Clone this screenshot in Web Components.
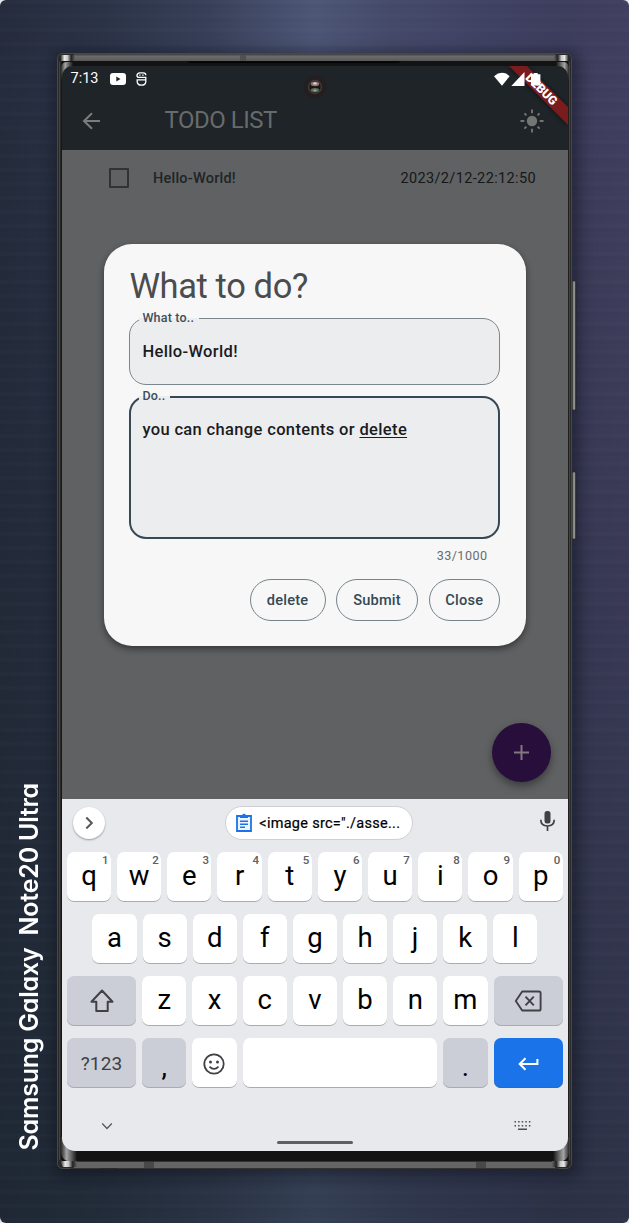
<!DOCTYPE html>
<html lang="en">
<head>
<meta charset="utf-8">
<title>Todo List</title>
<style>
html,body{margin:0;background:#e4e5e8}
body{width:629px;height:1223px;overflow:hidden;font-family:Roboto,sans-serif}
</style>
</head>
<body>
<device-stage>
  <device-label slot="label">Samsung Galaxy&nbsp; Note20 Ultra</device-label>
  <phone-frame>
    <todo-screen></todo-screen>
    <soft-keyboard></soft-keyboard>
  </phone-frame>
</device-stage>
<script>
const define = (name, html) => {
  const t = document.createElement('template');
  t.innerHTML = html;
  customElements.define(name, class extends HTMLElement {
    constructor() {
      super();
      this.attachShadow({mode: 'open'}).appendChild(t.content.cloneNode(true));
    }
  });
};

define('device-stage', `
<style>
:host{display:grid;grid-template-columns:57px 515px 57px;grid-template-rows:1116px;padding:53px 0 54px;width:629px;height:1223px;box-sizing:border-box;border-radius:6px;overflow:hidden;
background:
 repeating-linear-gradient(180deg,rgba(255,255,255,.01) 0 3px,rgba(0,0,0,.018) 5px 7px,transparent 9px 14px),
 linear-gradient(180deg,rgba(20,28,32,0) 0%,rgba(20,28,32,.15) 40%,rgba(22,34,40,.45) 100%),
 linear-gradient(90deg,#252c3d 0%,#2b3347 16%,#384059 33%,#4d5677 50%,#454a6b 62%,#404264 78%,#3d3d5d 90%,#424061 100%)}
</style>
<slot name="label"></slot><slot></slot>`);

define('device-label', `
<style>
:host{display:flex;align-items:center;height:1116px;width:57px;color:#fff;font:600 25px/30px Inter,sans-serif;font-feature-settings:"cv11";letter-spacing:-.22px}
span{writing-mode:vertical-rl;transform:rotate(180deg);white-space:pre;margin:711px 0 0 14px;display:block}
</style>
<span><slot></slot></span>`);

define('phone-frame', `
<style>
:host{display:block;position:relative;width:515px;height:1116px;box-sizing:border-box;padding:13px 4px 18px 5px;border-radius:6px;background:#262626;box-shadow:2px 3px 14px 5px rgba(10,12,22,.42)}
svg{position:absolute;left:0;top:0;overflow:visible}
.screen{position:relative;width:506px;height:1085px;border-radius:11px 11px 13px 13px;overflow:hidden;display:flex;flex-direction:column;background:#1e2427}
</style>
<svg width="520" height="1116" viewBox="0 0 520 1116">
 <defs>
  <linearGradient id="t" x1="0" y1="0" x2="0" y2="1"><stop offset="0" stop-color="#3d3d3d"/><stop offset=".3" stop-color="#6b6b6b"/><stop offset=".8" stop-color="#5c5c5c"/><stop offset="1" stop-color="#222"/></linearGradient>
  <linearGradient id="c" x1="0" x2="1"><stop offset="0" stop-color="#2a2a2a"/><stop offset=".35" stop-color="#a5a5a5"/><stop offset="1" stop-color="#131313"/></linearGradient>
  <linearGradient id="d" x1="1" x2="0"><stop offset="0" stop-color="#2a2a2a"/><stop offset=".35" stop-color="#a5a5a5"/><stop offset="1" stop-color="#131313"/></linearGradient>
  <linearGradient id="e" x1="0" x2="1"><stop offset="0" stop-color="#111"/><stop offset=".3" stop-color="#e8e8e8"/><stop offset=".5" stop-color="#c8c8c8"/><stop offset=".75" stop-color="#222"/><stop offset="1" stop-color="#626262"/></linearGradient>
  <linearGradient id="f" x1="1" x2="0"><stop offset="0" stop-color="#111"/><stop offset=".3" stop-color="#e8e8e8"/><stop offset=".5" stop-color="#c8c8c8"/><stop offset=".75" stop-color="#222"/><stop offset="1" stop-color="#626262"/></linearGradient>
  <linearGradient id="b" x1="0" x2="1"><stop offset="0" stop-color="#3b3d3c"/><stop offset=".55" stop-color="#a5aaa6"/><stop offset="1" stop-color="#222"/></linearGradient>
 </defs>
 <rect x="515" y="228" width="4" height="129" rx="1" fill="url(#b)" stroke="#222" stroke-width=".6"/>
 <rect x="515" y="419" width="4" height="67" rx="1" fill="url(#b)" stroke="#222" stroke-width=".6"/>
 <rect x=".5" y=".5" width="514" height="1115" rx="5" fill="#292928" stroke="#484848"/>
 <path d="M2.5 9V1107M512.5 9V1107" stroke="#45433f"/>
 <path d="M4.5 9V1107M511 9V1107" stroke="#171717"/>
 <rect x="17" y="1" width="481" height="8" fill="url(#t)"/>
 <rect x="5" y="8" width="506" height="12" fill="#131313"/>
 <path d="M130 8.5H344L341 10H133Z" fill="#030303"/>
 <rect x="183" y="2" width="6" height="6" fill="#505050"/>
 <rect x="5" y="1085" width="506" height="24" fill="#131313"/>
 <rect x="17" y="1109" width="481" height="6" fill="#656565"/>
 <path d="M13 1108.5H502M13 1115.5H502" stroke="#333"/>
 <path d="M87 1109h10v6H87zM419 1109h10v6h-10z" fill="#484848"/>
 <path d="M4 28V14Q5 9 10 9H16V20H5z" fill="url(#c)"/><path d="M512 28V14Q511 9 506 9H499V20H511z" fill="url(#d)"/>
 <path d="M4 1084H20V1108H10Q5 1106 4 1100z" fill="url(#c)"/><path d="M512 1084H496V1108H506Q511 1106 512 1100z" fill="url(#d)"/>
 <path d="M4 2H18V8H3V4z" fill="url(#e)"/><path d="M511 2H497V8H512V4z" fill="url(#f)"/>
 <path d="M3 1108H20V1114H6z" fill="url(#e)"/><path d="M512 1108H495V1114H509z" fill="url(#f)"/>
 <path d="M42 1115.5q10 3 19 0z" fill="#222"/>
</svg>
<div class="screen"><slot></slot></div>`);

define('status-bar', `
<style>
:host{display:flex;align-items:center;height:26px;margin-bottom:-1px;padding:0 27px 0 8.5px;color:#fff;font-size:14.5px;line-height:26px}
span{width:39px}
svg{display:block}
.yt{margin-right:10px}.sp{flex:1}
</style>
<span>7:13</span>
<svg class="yt" width="16" height="12" viewBox="0 0 16 12"><rect width="16" height="12" rx="3" fill="#fff"/><path d="M6.3 3.5v5L10.5 6z" fill="#1e2427"/></svg>
<svg width="11" height="14" viewBox="0 0 11 14" fill="none" stroke="#fff" stroke-width="1.3"><path d="M10 5.4H3.2Q1 5.4 1 3.4T3.4 .8H7.4Q9.8 .8 9.8 3.3M1.2 7.8H9.8V9.8Q9.4 13.1 5.5 13.1T1.2 9.8zM3.2 3.1h1.4M6.2 3.1h1.4M9.8 5v3"/></svg>
<div class="sp"></div>
<svg width="47" height="14" viewBox="0 0 47 14" fill="#fff"><path d="M0 4.2Q3.8 .8 8 .8T15.6 4.2L8 13.8z"/><path d="M30.5 0V14H17.3z"/><path d="M37 2.2h2.7V1h4v1.2h2.7V13.5H37z"/></svg>`);

define('app-bar', `
<style>
:host{display:flex;align-items:center;height:59px;padding:0 24px 0 18px;box-sizing:border-box;color:#686b6c;font-size:24px;line-height:59px;letter-spacing:-.5px}
span{margin-left:60.5px;flex:1}
svg{display:block}
</style>
<svg width="24" height="24" viewBox="0 0 24 24" fill="none" stroke="#7b7d7d" stroke-width="2"><path d="M20 12H4.5M12 4.2 4 12l8 7.8"/></svg>
<span>TODO LIST</span>
<svg width="24" height="24" viewBox="-12 -12 24 24" fill="#747676"><circle r="5.2"/><g stroke="#747676" stroke-width="1.9"><path d="M0-7.7v-3.8M0 7.7v3.8M-7.7 0h-3.8M7.7 0h3.8M5.6-5.6l2-2M-5.6-5.6l-2-2M5.6 5.6l2 2M-5.6 5.6l-2 2"/></g></svg>`);

define('todo-item', `
<style>
:host{display:flex;align-items:center;height:56px;padding:0 32px 0 47px;color:#1e2527;font-size:14.5px}
i{width:16px;height:16px;border:2px solid #303233;border-radius:1px;margin-right:24px;box-sizing:content-box}
b{font-weight:500;flex:1;letter-spacing:.22px}
time{color:#151718;letter-spacing:.37px}
</style>
<i></i><b><slot></slot></b><time><slot name="date"></slot></time>`);

define('outlined-field', `
<style>
:host{display:block;flex:none;position:relative;box-sizing:border-box;width:371px;height:67px;border:1px solid #7c878d;border-radius:17px;background:#ecedef;padding:21px 12px;color:#1a1c1e;font:500 16.5px/24px Roboto,sans-serif;letter-spacing:.35px}
:host([focused]){height:143px;border:2px solid #364954;padding:20px 11px}
label{position:absolute;left:9px;top:-9px;line-height:16px;font-size:12.5px;color:#3c4f5a;padding:0 5px 0 3px;letter-spacing:.2px;background:linear-gradient(#f7f7f7 0 8px,#ecedef 8px)}
:host([focused]) label{left:8px;top:-10px}
</style>
<label><slot name="label"></slot></label><slot></slot>`);

define('pill-button', `
<style>
:host{display:flex;align-items:center;justify-content:center;box-sizing:border-box;height:42px;border:1px solid #76848c;border-radius:21px;color:#344955;font-weight:500;font-size:14.6px;letter-spacing:.2px}
</style><slot></slot>`);

define('todo-dialog', `
<style>
:host{display:flex;flex-direction:column;box-sizing:border-box;width:422px;height:402px;border-radius:28px;background:#f7f7f7;padding:21px 25px 24px 25.4px;box-shadow:0 3px 7px rgba(0,0,0,.45)}
h1{margin:0 0 11px;font-weight:400;font-size:34.5px;line-height:42px;color:#4a4c4d;letter-spacing:-.4px}
outlined-field+outlined-field{margin-top:11px}
u{text-decoration-thickness:1px;text-underline-offset:2px}
.count{align-self:flex-end;margin:7px 13.5px 0 0;font-size:12.6px;line-height:20px;color:#6a6c6d;letter-spacing:.45px}
.row{display:flex;justify-content:flex-end;gap:10.5px;margin:13px 1px 0 0}
</style>
<h1>What to do?</h1>
<outlined-field><span slot="label">What to..</span>Hello-World!</outlined-field>
<outlined-field focused><span slot="label">Do..</span>you can change contents or <u>delete</u></outlined-field>
<div class="count">33/1000</div>
<div class="row"><pill-button style="width:76px">delete</pill-button><pill-button style="width:82px">Submit</pill-button><pill-button style="width:71.5px">Close</pill-button></div>`);

define('add-button', `
<style>
:host{display:flex;align-items:center;justify-content:center;width:59px;height:59px;border-radius:50%;background:#280e3b;box-shadow:0 4px 8px rgba(0,0,0,.4)}
</style>
<svg width="15" height="15" viewBox="0 0 15 15"><path d="M7.5 0v15M0 7.5h15" stroke="#81797f" stroke-width="2"/></svg>`);

define('todo-screen', `
<style>
:host{display:block;position:relative;height:733px;background:#5f6162;flex:none}
header{background:#1e2427;height:84px}
.modal{position:absolute;inset:25px 0 0 0;display:flex;align-items:center;justify-content:center}
add-button{position:absolute;right:17px;bottom:17px}
.debug{position:absolute;right:0;top:0}
.cam{position:absolute;left:241px;top:9px}
status-bar{position:relative}
</style>
<header>
<svg class="debug" width="70" height="70" viewBox="0 0 70 70"><defs><filter id="s" x="-20%" y="-20%" width="140%" height="140%"><feGaussianBlur stdDeviation="2"/></filter></defs><path d="M10 0H29L70 41V60z" fill="#000" opacity=".5" filter="url(#s)"/><path d="M11 0H29L70 41V59z" fill="#7a1b1d"/><text transform="translate(45 28.5) rotate(45)" text-anchor="middle" font-family="Roboto" font-size="12.2" font-weight="900" fill="#fff" y="1.5" x="-4.8">DEBUG</text></svg>
<svg class="cam" width="24" height="24" viewBox="-12 -12 24 24"><circle r="11.5" fill="#231f21"/><circle r="7.2" fill="#443739"/><circle r="5.6" fill="#1b1516"/><ellipse cy="-3" rx="4.2" ry="2.2" fill="#8d7572"/><ellipse cy="-3.6" rx="1.8" ry="1.2" fill="#ddd0cc"/><ellipse cy="3" rx="4.2" ry="2" fill="#5c6e55"/><ellipse cy="3.6" rx="1.6" ry="1" fill="#8fb08a"/></svg>
<status-bar></status-bar><app-bar></app-bar>
</header>
<todo-item>Hello-World!<span slot="date">2023/2/12-22:12:50</span></todo-item>
<add-button></add-button>
<div class="modal"><todo-dialog></todo-dialog></div>`);

define('key-cap', `
<style>
:host{display:flex;position:relative;align-items:center;justify-content:center;box-sizing:border-box;width:44.2px;height:50px;flex:none;border-radius:7px;background:#fff;box-shadow:inset 0 -1px #a9abaf;color:#000;font-size:27.5px;line-height:44px;padding-bottom:2px}
:host([wide]){width:69.3px}
:host([mod]){background:#cbced6}
:host([text]){color:#3d4043;font-size:19px;letter-spacing:.2px;padding:1px 0 0}
:host([low]){padding:1px 0 0}
:host([punct]){padding-top:9px}
:host([space]){flex:1}
:host([enter]){background:#1a73e8;box-shadow:inset 0 -1px #3568b4;padding:1px 0 0}
small{position:absolute;right:2.5px;top:1px;font-size:11.5px;line-height:15px;font-weight:500;color:#5e6063}
::slotted(svg){display:block}
</style>
<slot></slot><small><slot name="hint"></slot></small>`);

define('soft-keyboard', `
<style>
:host{display:block;height:352px;background:#e8e9ed;flex:none}
.strip{display:flex;align-items:center;justify-content:space-between;height:47px;padding:0 12.5px 0 10.5px}
.go{width:32px;height:32px;border-radius:50%;background:#fff;box-shadow:0 1px 2px rgba(0,0,0,.35);display:flex;align-items:center;justify-content:center}
.clip{display:flex;align-items:center;width:188px;height:34px;box-sizing:border-box;border:1px solid #cfd0d6;border-radius:17px;background:#fff;font-size:14.5px;color:#000;padding:1px 0 0 10px;margin-right:5.5px;letter-spacing:.28px;-webkit-text-stroke:.2px #000}
.clip svg{margin:0 7.5px 2px 0}
.strip>svg{margin-bottom:3px}
.keys{display:flex;flex-direction:column;gap:12.2px;padding:5.5px 5px 0 4.9px}
.r{display:flex;justify-content:space-between;width:496px}
.r.mid{width:445px;align-self:center}
.nav{display:flex;justify-content:space-between;padding:30px 37px 0 39px;height:17px}
.bar{width:76px;height:3px;border-radius:2px;background:#5f6062;margin:6px auto 0}
</style>
<div class="strip">
 <div class="go"><svg width="16" height="16" viewBox="0 0 16 16"><path d="M5.3 2.5 10.8 8l-5.5 5.5" fill="none" stroke="#55585b" stroke-width="2"/></svg></div>
 <div class="clip"><svg width="16" height="19" viewBox="0 0 16 19"><path d="M1 3H15V18H1z" fill="#eef4fe" stroke="#1a73e8" stroke-width="1.8"/><path d="M4 2h2.2a2 2 0 0 1 3.6 0H12v3H4z" fill="#1a73e8"/><path d="M4 8.2h8M4 11.2h8M4 14.2h5" stroke="#1a73e8" stroke-width="1.5"/></svg>&lt;image src="./asse...</div>
 <svg width="17" height="22" viewBox="0 0 17 22"><rect x="5.5" y="1" width="6" height="12.5" rx="2.5" fill="#3f4144"/><path d="M1.8 9.8q0 6.2 6.7 6.2t6.7-6.2M8.5 16v5" fill="none" stroke="#3f4144" stroke-width="1.7"/></svg>
</div>
<div class="keys">
 <div class="r" id="a"></div>
 <div class="r mid" id="b"></div>
 <div class="r" id="c">
  <key-cap wide mod low><svg width="26" height="26" viewBox="0 0 26 26" fill="none" stroke="#3f4144" stroke-width="2" stroke-linejoin="round"><path d="M13 2.5 2.5 13.7H7.3V23h11.4v-9.3h4.8z"/></svg></key-cap>
  <key-cap wide mod low><svg width="28" height="22" viewBox="0 0 28 22" fill="none" stroke="#3f4144" stroke-width="1.9" stroke-linejoin="round"><path d="M8.2 1.5H25q1.6 0 1.6 1.6v15.8q0 1.6-1.6 1.6H8.2L1.8 11z"/><path d="m11.5 6.7 8.3 8.6m0-8.6-8.3 8.6"/></svg></key-cap>
 </div>
 <div class="r" style="gap:6px">
  <key-cap wide mod text>?123</key-cap><key-cap mod punct>,</key-cap>
  <key-cap low><svg width="22" height="22" viewBox="-11 -11 22 22"><circle r="9.7" fill="none" stroke="#3f4144" stroke-width="1.8"/><circle cx="-3.5" cy="-2" r="1.5" fill="#3f4144"/><circle cx="3.5" cy="-2" r="1.5" fill="#3f4144"/><path d="M-4.5 2.6q4.5 4.6 9 0" fill="none" stroke="#3f4144" stroke-width="1.7"/></svg></key-cap>
  <key-cap space></key-cap><key-cap mod punct>.</key-cap>
  <key-cap wide enter><svg width="21" height="14" viewBox="0 0 21 14" fill="none" stroke="#fff" stroke-width="2"><path d="M19.4 2v5H2M7.5 1.3 1.7 7l5.8 5.7"/></svg></key-cap>
 </div>
</div>
<div class="nav">
 <svg width="12" height="17" viewBox="0 0 12 17"><path d="m1.2 5.5 4.8 5 4.8-5" fill="none" stroke="#55585b" stroke-width="1.3"/></svg>
 <svg width="17" height="17" viewBox="0 0 17 17" stroke="#4c4e51" stroke-width="1.5"><path d="M.5 3.7h16M.5 7.7h16" stroke-dasharray="1.5 2.1"/><path d="M4 11.2h9"/></svg>
</div>
<div class="bar"></div>`);

const board = document.querySelector('soft-keyboard').shadowRoot;
const cap = (ch, hint) => {
  const k = document.createElement('key-cap');
  k.textContent = ch;
  if (hint) {
    const s = document.createElement('span');
    s.slot = 'hint';
    s.textContent = hint;
    k.append(s);
  }
  return k;
};
[...'qwertyuiop'].forEach((ch, i) => board.getElementById('a').append(cap(ch, '1234567890'[i])));
[...'asdfghjkl'].forEach(ch => board.getElementById('b').append(cap(ch)));
const third = board.getElementById('c');
[...'zxcvbnm'].forEach(ch => third.insertBefore(cap(ch), third.lastElementChild));
</script>
</body>
</html>
